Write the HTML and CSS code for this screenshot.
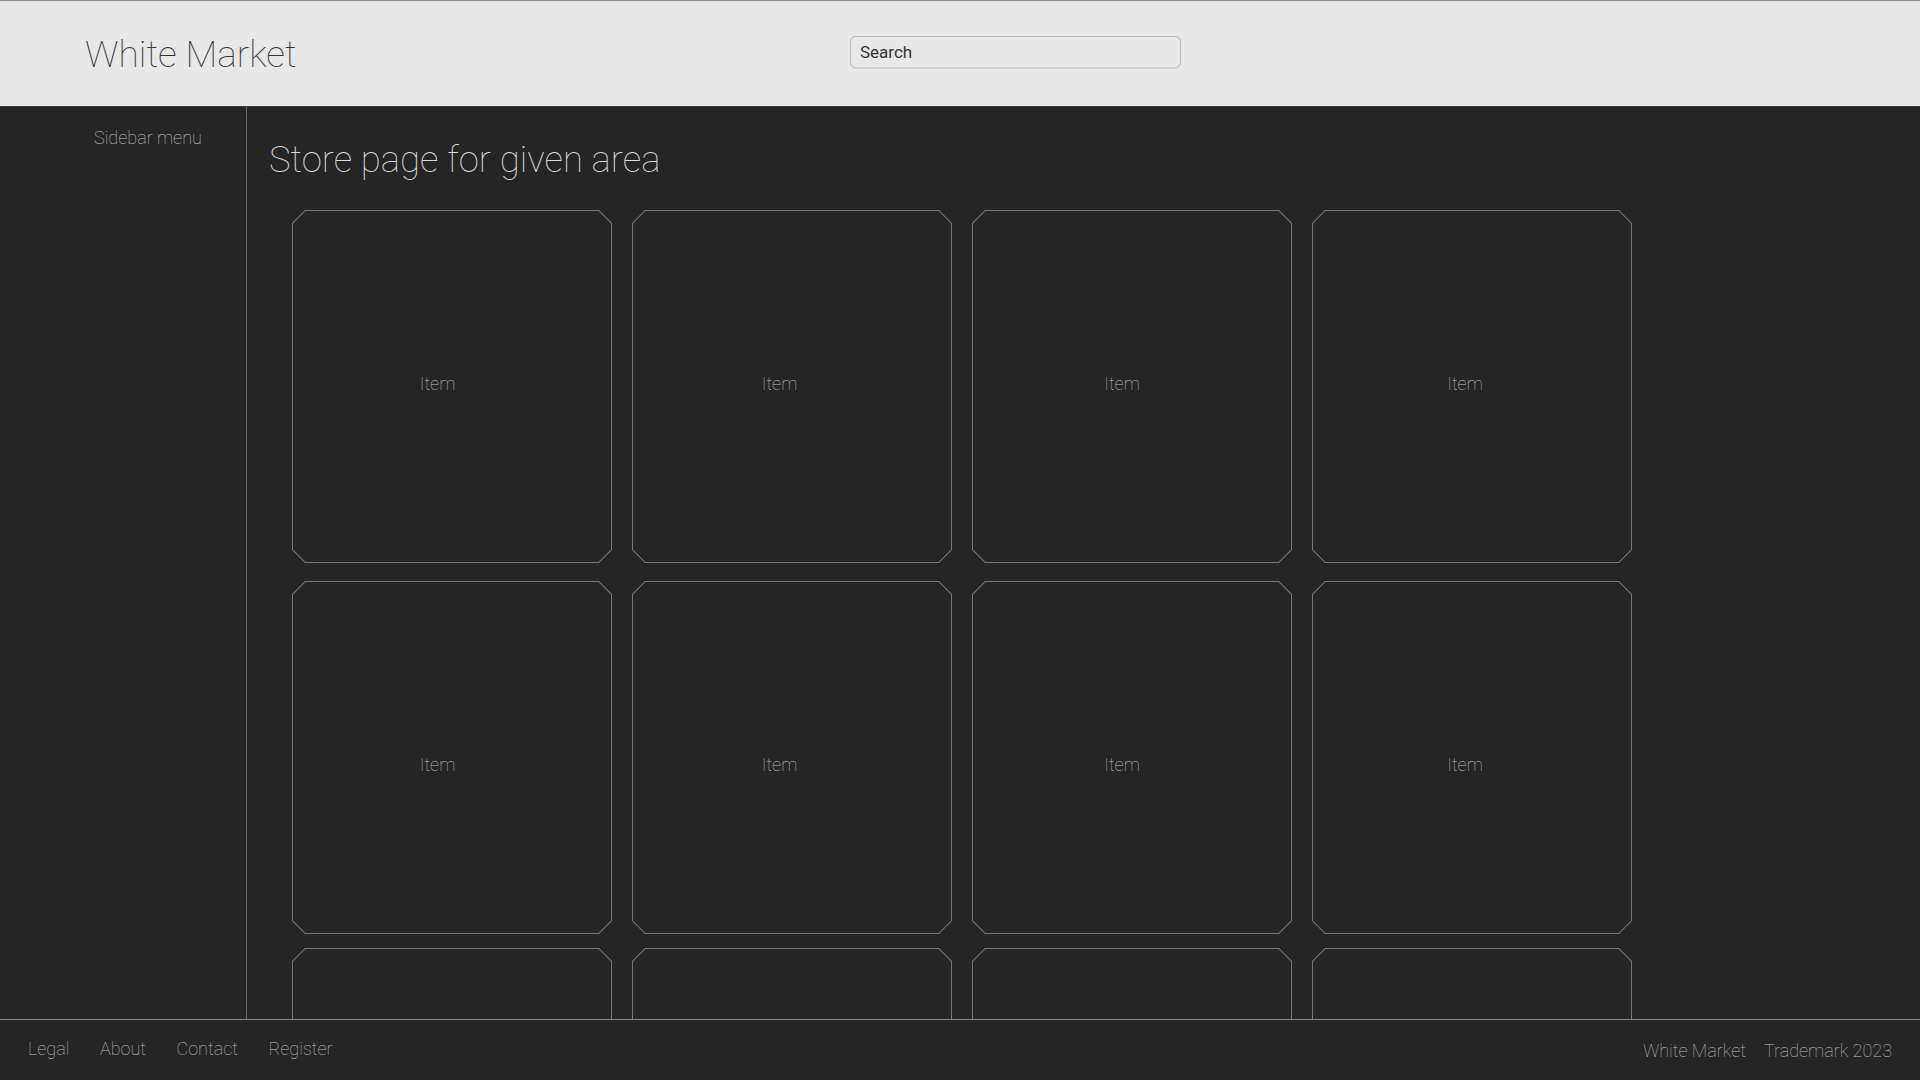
FILE: index.html
```html
<!DOCTYPE html>
<html lang="en">
<head>
<meta charset="utf-8">
<title>White Market</title>
<link rel="stylesheet" href="styles.css">
</head>
<body>
<header class="topbar">
  <div class="brand">White Market</div>
  <div class="search-frame">
    <div class="search-inner">
      <input class="search-input" type="text" placeholder="Search">
    </div>
  </div>
</header>
<div class="middle">
  <aside class="sidebar">
    <div class="sidebar-title">Sidebar menu</div>
  </aside>
  <main class="content">
    <h1 class="page-title">Store page for given area</h1>
    <div class="grid">
      <div class="card"><div class="card-in"><span class="label">Item</span></div></div>
      <div class="card"><div class="card-in"><span class="label">Item</span></div></div>
      <div class="card"><div class="card-in"><span class="label">Item</span></div></div>
      <div class="card"><div class="card-in"><span class="label">Item</span></div></div>
      <div class="card"><div class="card-in"><span class="label">Item</span></div></div>
      <div class="card"><div class="card-in"><span class="label">Item</span></div></div>
      <div class="card"><div class="card-in"><span class="label">Item</span></div></div>
      <div class="card"><div class="card-in"><span class="label">Item</span></div></div>
      <div class="card"><div class="card-in"><span class="label">Item</span></div></div>
      <div class="card"><div class="card-in"><span class="label">Item</span></div></div>
      <div class="card"><div class="card-in"><span class="label">Item</span></div></div>
      <div class="card"><div class="card-in"><span class="label">Item</span></div></div>
    </div>
  </main>
</div>
<footer class="footer">
  <nav class="footer-links">
    <span>Legal</span>
    <span>About</span>
    <span>Contact</span>
    <span>Register</span>
  </nav>
  <div class="footer-right">
    <span>White Market</span>
    <span>Trademark 2023</span>
  </div>
</footer>
</body>
</html>
```
FILE: styles.css
```css
* { box-sizing: border-box; }

html, body {
  margin: 0;
  padding: 0;
  height: 100%;
}

body {
  background: #252525;
  font-family: Roboto, "Liberation Sans", sans-serif;
  font-weight: 100;
  overflow: hidden;
}

.topbar {
  height: 107px;
  background: #e8e8e8;
  border-top: 1px solid #8a8a8a;
  border-bottom: 1px solid #3c3c3c;
  display: flex;
  align-items: center;
  padding-left: 85px;
}

.brand {
  font-size: 37px;
  font-weight: 100;
  color: #333333;
  width: 765px;
  line-height: 1;
  margin-top: 2px;
}

.search-frame {
  width: 331px;
  height: 33px;
  background: #bdbdbd;
  padding: 1px;
  margin-bottom: 3px;
  clip-path: polygon(4px 0, calc(100% - 4px) 0, 100% 4px, 100% calc(100% - 4px), calc(100% - 4px) 100%, 4px 100%, 0 calc(100% - 4px), 0 4px);
}

.search-inner {
  height: 100%;
  background: #e8e8e8;
  clip-path: polygon(3.4px 0, calc(100% - 3.4px) 0, 100% 3.4px, 100% calc(100% - 3.4px), calc(100% - 3.4px) 100%, 3.4px 100%, 0 calc(100% - 3.4px), 0 3.4px);
}

.search-input {
  width: 100%;
  height: 100%;
  border: none;
  outline: none;
  background: transparent;
  padding: 0 0 0 9px;
  font-family: Roboto, "Liberation Sans", sans-serif;
  font-size: 17px;
  font-weight: 400;
  color: #333;
}

.search-input::placeholder {
  color: #333;
  opacity: 1;
}

.middle {
  display: flex;
  height: 912px;
}

.sidebar {
  width: 247px;
  flex: none;
  border-right: 1px solid #6a6a6a;
  padding: 20px 0 0 94px;
}

.sidebar-title {
  font-size: 18px;
  color: #c4c4c4;
}

.content {
  flex: 1;
  overflow: hidden;
  padding-left: 22px;
}

.page-title {
  margin: 31px 0 0 0;
  font-size: 36.5px;
  font-weight: 100;
  color: #dadada;
  line-height: normal;
}

.grid {
  display: grid;
  grid-template-columns: repeat(4, 320px);
  grid-auto-rows: 353px;
  column-gap: 20px;
  row-gap: 18px;
  padding-left: 23px;
  margin-top: 29px;
}

.card {
  background: #777777;
  padding: 1px;
  clip-path: polygon(13px 0, calc(100% - 13px) 0, 100% 13px, 100% calc(100% - 13px), calc(100% - 13px) 100%, 13px 100%, 0 calc(100% - 13px), 0 13px);
}

.card:nth-child(n+9) {
  margin-top: -4px;
}

.card-in {
  height: 100%;
  background: #252525;
  clip-path: polygon(12.4px 0, calc(100% - 12.4px) 0, 100% 12.4px, 100% calc(100% - 12.4px), calc(100% - 12.4px) 100%, 12.4px 100%, 0 calc(100% - 12.4px), 0 12.4px);
  display: flex;
  align-items: center;
  justify-content: center;
  padding-bottom: 7px;
}

.card:nth-child(n+5) .card-in {
  padding-bottom: 0;
  padding-top: 13px;
}

.card:nth-child(4n+1) .card-in { padding-right: 29px; }
.card:nth-child(4n+2) .card-in { padding-right: 25px; }
.card:nth-child(4n+3) .card-in { padding-right: 20px; }
.card:nth-child(4n) .card-in { padding-right: 14px; }

.label {
  font-size: 18px;
  color: #bdbdbd;
}

.footer {
  height: 61px;
  border-top: 1px solid #888888;
  display: flex;
  align-items: center;
  justify-content: space-between;
  padding: 0 28px 2px 28px;
  font-size: 18px;
  color: #bcbcbc;
}

.footer-links {
  display: flex;
  gap: 30.5px;
  margin-bottom: 1px;
}

.footer-right {
  display: flex;
  gap: 18px;
  margin-top: 3px;
}
```
